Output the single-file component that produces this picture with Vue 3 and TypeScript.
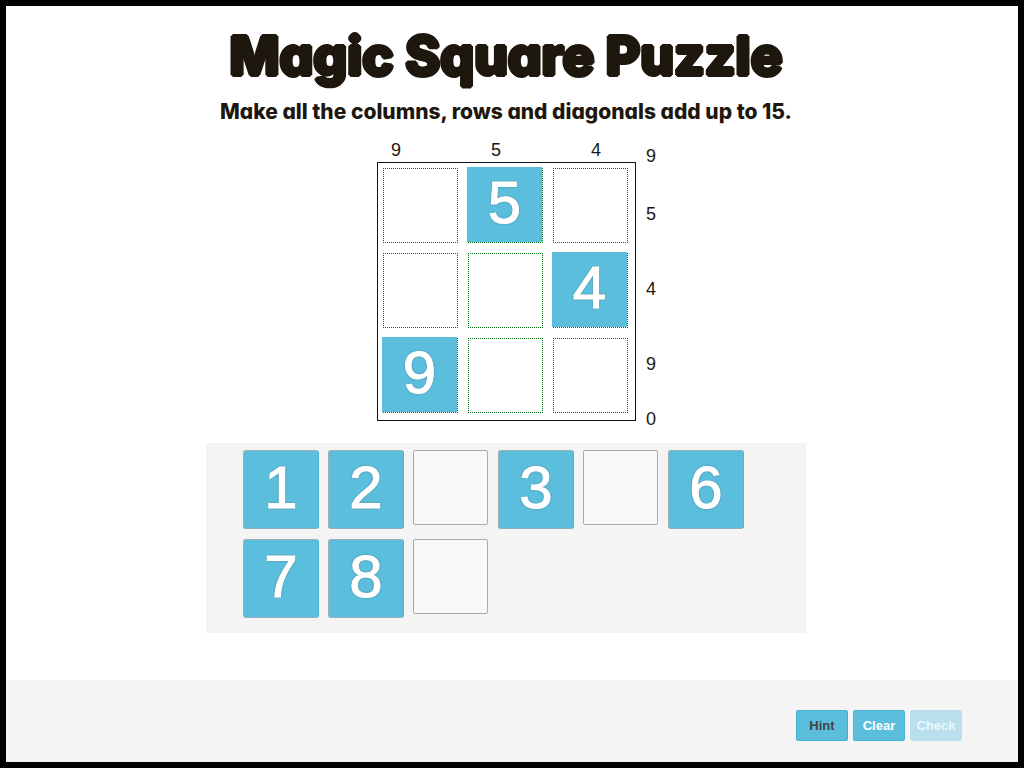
<script setup lang="ts">
import { computed, ref } from 'vue'

type Cell = number | null

const initialBoard: Cell[] = [null, 5, null, null, null, 4, 9, null, null]
const traySlots = [1, 2, 5, 3, 4, 6, 7, 8, 9]

const board = ref<Cell[]>([...initialBoard])
const selected = ref<Cell>(null)

const sum = (indexes: number[]): number =>
  indexes.reduce((total, i) => total + (board.value[i] ?? 0), 0)

const columnSums = computed(() => [[0, 3, 6], [1, 4, 7], [2, 5, 8]].map(sum))
const rowSums = computed(() => [[0, 1, 2], [3, 4, 5], [6, 7, 8]].map(sum))
const risingSum = computed(() => sum([6, 4, 2]))
const fallingSum = computed(() => sum([0, 4, 8]))
const complete = computed(() => board.value.every((cell) => cell !== null))

function place(index: number): void {
  if (board.value[index] !== null) {
    board.value[index] = null
  } else if (selected.value !== null) {
    board.value[index] = selected.value
    selected.value = null
  }
}

function clearBoard(): void {
  board.value = board.value.map(() => null)
  selected.value = null
}
</script>

<template>
  <div class="page">
    <main class="content">
      <h1 class="title">Magic Square Puzzle</h1>
      <p class="subtitle">Make all the columns, rows and diagonals add up to 15.</p>

      <section class="puzzle" aria-label="Puzzle board">
        <div class="column-sums">
          <span v-for="(value, i) in columnSums" :key="i">{{ value }}</span>
        </div>
        <div class="board">
          <div v-for="(cell, i) in board" :key="i" class="cell">
            <button
              type="button"
              :class="cell === null ? 'slot' : 'tile placed'"
              :aria-label="cell === null ? `Empty square ${i + 1}` : undefined"
              @click="place(i)"
            >{{ cell }}</button>
          </div>
        </div>
        <div class="side-sums">
          <span>{{ risingSum }}</span>
          <div class="row-sums">
            <span v-for="(value, i) in rowSums" :key="i">{{ value }}</span>
          </div>
          <span>{{ fallingSum }}</span>
        </div>
      </section>

      <section class="tray" aria-label="Number tiles">
        <template v-for="n in traySlots" :key="n">
          <div v-if="board.includes(n)" class="vacant"></div>
          <button v-else type="button" class="tile loose" @click="selected = n">{{ n }}</button>
        </template>
      </section>
    </main>

    <footer class="actions">
      <button type="button" class="action hint">Hint</button>
      <button type="button" class="action" @click="clearBoard">Clear</button>
      <button type="button" class="action" :disabled="!complete">Check</button>
    </footer>
  </div>
</template>

<style>
body {
  margin: 0;
}
</style>

<style scoped>
.page {
  box-sizing: border-box;
  min-height: 100vh;
  display: flex;
  flex-direction: column;
  border: 6px solid #000;
  background: #fff;
  color: #1e170e;
  font-family: "Liberation Sans", Arial, sans-serif;
}

.content {
  flex: 1;
  display: flex;
  flex-direction: column;
  align-items: center;
  padding: 16px 12px 24px 0;
}

.title,
.subtitle {
  margin: 0;
  font-family: Inter, sans-serif;
  font-feature-settings: "cv11";
  text-align: center;
}

.title {
  font-size: 53px;
  line-height: 68px;
  font-weight: 800;
  text-shadow:
    2px 0 #1e170e, -2px 0 #1e170e, 0 2px #1e170e, 0 -2px #1e170e,
    1px 1px #1e170e, -1px 1px #1e170e, 1px -1px #1e170e, -1px -1px #1e170e;
}

.subtitle {
  font-size: 21px;
  line-height: 28px;
  padding-top: 8px;
  font-weight: 800;
}

.puzzle {
  display: grid;
  grid-template-columns: 300px 20px;
  grid-template-rows: 20px auto;
  row-gap: 2px;
  padding-top: 14px;
  font-size: 18px;
  line-height: 20px;
}

.column-sums {
  display: grid;
  grid-template-columns: repeat(3, 1fr);
  text-align: center;
}

.board {
  grid-row: 2;
  justify-self: start;
  align-self: start;
  margin-left: 31px;
  display: grid;
  grid-template-columns: repeat(3, 75px);
  grid-auto-rows: 75px;
  gap: 10px;
  padding: 5px 7px 7px 5px;
  border: 1px solid #111;
}

.cell {
  box-sizing: border-box;
  border: 1px dotted #006c10;
}

.side-sums {
  grid-column: 2;
  grid-row: 1 / span 2;
  align-self: start;
  padding-top: 6px;
}

.side-sums > span {
  display: block;
}

.row-sums {
  display: grid;
  grid-auto-rows: 75px;
  align-items: center;
  padding: 10px 0 8px;
}

.slot {
  width: 100%;
  height: 100%;
  padding: 0;
  border: 0;
  background: transparent;
}

.tile {
  box-sizing: border-box;
  display: block;
  padding: 0 0 4px;
  border: 0;
  background: #5bbedd;
  color: #fff;
  font-family: inherit;
  font-size: 60px;
  line-height: 70px;
  -webkit-text-stroke: 1px #fff;
  text-shadow: 0 0 1px #fff, 0 0 2px #333;
  cursor: pointer;
}

.placed {
  width: 75px;
  height: 75px;
  margin: -2px 0 0 -2px;
}

.loose {
  width: 76px;
  height: 79px;
  border: 1px solid;
  border-color: #9cb0b6 #4db3d2 #8fb0ba #9cb0b6;
  border-radius: 3px;
}

.tray {
  box-sizing: border-box;
  width: 600px;
  max-width: 100%;
  margin-top: 14px;
  padding: 7px 37px 15px;
  display: grid;
  grid-template-columns: repeat(auto-fill, 75px);
  gap: 10px;
  background: #f4f4f4;
}

.vacant {
  box-sizing: border-box;
  width: 75px;
  height: 75px;
  border: 1px solid #aaa;
  border-radius: 2px;
  background: #f8f8f8;
}

.actions {
  display: flex;
  justify-content: flex-end;
  gap: 5px;
  padding: 30px 56px 21px;
  background: #f4f4f4;
}

.action {
  box-sizing: border-box;
  width: 52px;
  height: 31px;
  padding: 0;
  border: 1px solid #46b2d5;
  border-radius: 2px;
  background: #5bbedd;
  color: #fff;
  font: bold 13px/18px "Liberation Sans", Arial, sans-serif;
  cursor: pointer;
}

.hint {
  color: #444;
}

.action:disabled {
  border-color: #b8dfeb;
  background: #b8dfeb;
  color: #e9f7fb;
  cursor: default;
}
</style>
